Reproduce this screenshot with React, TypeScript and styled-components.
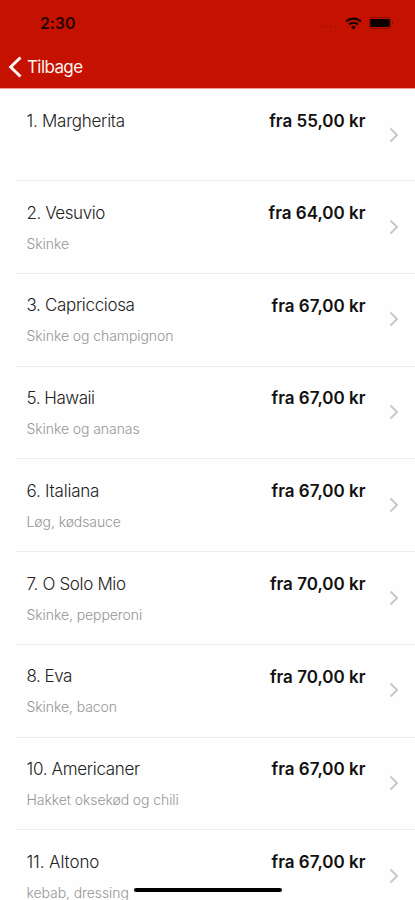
import React from 'react';
import styled, { createGlobalStyle } from 'styled-components';

const GlobalStyle = createGlobalStyle`
  * { box-sizing: border-box; }
  html, body { margin: 0; background: #fefefe; overflow: hidden; }
`;

const Screen = styled.main`
  position: relative;
  display: flex;
  flex-direction: column;
  width: 415px;
  height: 900px;
  overflow: hidden;
  background: #fefefe;
  font-family: Inter, 'Liberation Sans', sans-serif;
`;

const Header = styled.header`
  flex: none;
  height: 89px;
  border-bottom: 1px solid #ee9f98;
  background: #c51200;
`;

const StatusBar = styled.div`
  display: flex;
  align-items: center;
  justify-content: space-between;
  height: 46px;
  padding: 0 21px 0 40px;
`;

const Time = styled.span`
  color: #250300;
  font-size: 16px;
  font-weight: 600;
  letter-spacing: -0.1px;
`;

const StatusIcons = styled.div`
  display: flex;
  align-items: center;
`;

const SignalDots = styled.svg`
  display: block;
  margin: 7px 6px 0 0;
`;

const WifiIcon = styled.svg`
  display: block;
  margin-right: 7px;
`;

const BatteryIcon = styled.svg`
  display: block;
`;

const BackButton = styled.button`
  display: flex;
  align-items: center;
  gap: 5px;
  height: 41px;
  padding: 0 0 0 8px;
  border: 0;
  background: none;
  color: #fff1ef;
  font: 400 17px/22px Inter, 'Liberation Sans', sans-serif;
  letter-spacing: -0.6px;
`;

const List = styled.ul`
  flex: none;
  margin: 0;
  padding: 0 0 0 16px;
  list-style: none;
`;

const Row = styled.li`
  display: flex;
  height: 92.75px;
  padding: 20.5px 16px 0 10.5px;
  border-bottom: 1px solid #eeeeee;

  &:first-child {
    height: 92px;
  }
`;

const Details = styled.div`
  flex: 1;
  min-width: 0;
`;

const Name = styled.div<{ $spacing: number }>`
  color: #222;
  font-size: 17px;
  font-weight: 300;
  line-height: 22px;
  letter-spacing: ${(p) => p.$spacing}px;
`;

const Toppings = styled.div`
  margin-top: 11px;
  color: #969696;
  font-size: 14px;
  font-weight: 300;
  line-height: 18px;
  letter-spacing: -0.08px;
`;

const Price = styled.div`
  margin-top: 0.4px;
  color: #111;
  font-size: 17px;
  font-weight: 600;
  line-height: 22px;
  letter-spacing: 0;
  white-space: nowrap;
`;

const Chevron = styled.svg`
  display: block;
  flex: none;
  margin: 17px 0 0 23.5px;
`;

const HomeIndicator = styled.div`
  position: absolute;
  left: 134px;
  top: 888px;
  width: 148px;
  height: 4px;
  border-radius: 2px;
  background: #000;
`;

const pizzas = [
  { name: '1. Margherita', toppings: '', price: '55,00', spacing: -0.25 },
  { name: '2. Vesuvio', toppings: 'Skinke', price: '64,00', spacing: -0.44 },
  { name: '3. Capricciosa', toppings: 'Skinke og champignon', price: '67,00', spacing: -0.34 },
  { name: '5. Hawaii', toppings: 'Skinke og ananas', price: '67,00', spacing: -0.46 },
  { name: '6. Italiana', toppings: 'Løg, kødsauce', price: '67,00', spacing: -0.22 },
  { name: '7. O Solo Mio', toppings: 'Skinke, pepperoni', price: '70,00', spacing: -0.34 },
  { name: '8. Eva', toppings: 'Skinke, bacon', price: '70,00', spacing: -0.5 },
  { name: '10. Americaner', toppings: 'Hakket oksekød og chili', price: '67,00', spacing: -0.31 },
  { name: '11. Altono', toppings: 'kebab, dressing', price: '67,00', spacing: -0.1 },
];

export default function App() {
  return (
    <>
      <GlobalStyle />
      <Screen>
        <Header>
          <StatusBar>
            <Time>2:30</Time>
            <StatusIcons>
              <SignalDots width="20" height="3" viewBox="0 0 20 3" fill="#a60f00">
                <circle cx="2" cy="1.5" r="1" />
                <circle cx="7" cy="1.5" r="1" />
                <circle cx="12" cy="1.5" r="1" />
                <circle cx="17" cy="1.5" r="1" />
              </SignalDots>
              <WifiIcon width="17" height="13" viewBox="0 0 17 13" fill="none" stroke="#1c0200" strokeWidth="2.1">
                <path d="M1.2 4.6a10.4 10.4 0 0 1 14.6 0" />
                <path d="M4 7.6a6.4 6.4 0 0 1 9 0" />
                <path d="M8.5 12.5 6.1 10a3.4 3.4 0 0 1 4.8 0Z" fill="#1c0200" stroke="none" />
              </WifiIcon>
              <BatteryIcon width="25" height="12" viewBox="0 0 25 12">
                <rect x=".5" y=".5" width="21" height="11" rx="2.6" fill="none" stroke="#900c00" />
                <rect x="1.2" y="2" width="19.6" height="8" rx="1" fill="#0b0000" />
                <path d="M23 4v4c1.7-.7 1.7-3.3 0-4Z" fill="#860b00" />
              </BatteryIcon>
            </StatusIcons>
          </StatusBar>
          <BackButton>
            <svg width="14" height="22" viewBox="0 0 14 22" fill="none" stroke="#fff5f3" strokeWidth="3">
              <path d="M12.5 1.5 2.7 11l9.8 9.5" />
            </svg>
            Tilbage
          </BackButton>
        </Header>
        <List>
          {pizzas.map((pizza) => (
            <Row key={pizza.name}>
              <Details>
                <Name $spacing={pizza.spacing}>{pizza.name}</Name>
                <Toppings>{pizza.toppings}</Toppings>
              </Details>
              <Price>fra {pizza.price} kr</Price>
              <Chevron width="10" height="16" viewBox="0 0 10 16" fill="none" stroke="#c8c8ca" strokeWidth="2">
                <path d="m1.5 1.5 6.5 6.5-6.5 6.5" />
              </Chevron>
            </Row>
          ))}
        </List>
        <HomeIndicator />
      </Screen>
    </>
  );
}
